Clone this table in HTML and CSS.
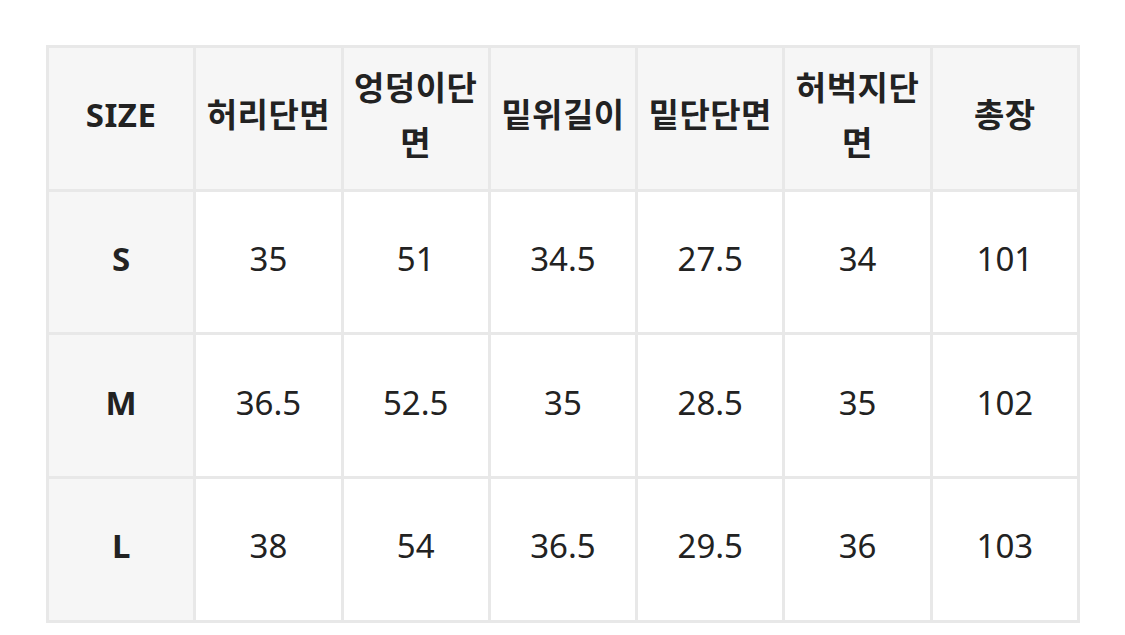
FILE: index.html
```html
<!DOCTYPE html>
<html lang="ko">
<head>
<meta charset="utf-8">
<title>Size chart</title>
<link rel="stylesheet" href="styles.css">
</head>
<body>
<div class="wrap">
<table class="size-table">
  <thead>
    <tr>
      <th>SIZE</th>
      <th>허리단면</th>
      <th>엉덩이단면</th>
      <th>밑위길이</th>
      <th>밑단단면</th>
      <th>허벅지단면</th>
      <th>총장</th>
    </tr>
  </thead>
  <tbody>
    <tr>
      <th>S</th><td>35</td><td>51</td><td>34.5</td><td>27.5</td><td>34</td><td>101</td>
    </tr>
    <tr>
      <th>M</th><td>36.5</td><td>52.5</td><td>35</td><td>28.5</td><td>35</td><td>102</td>
    </tr>
    <tr>
      <th>L</th><td>38</td><td>54</td><td>36.5</td><td>29.5</td><td>36</td><td>103</td>
    </tr>
  </tbody>
</table>
</div>
</body>
</html>
```

FILE: styles.css
```css
html, body {
  margin: 0;
  padding: 0;
  background: #ffffff;
}

.wrap {
  padding: 45px 0 0 46px;
}

.size-table {
  border-collapse: collapse;
  table-layout: fixed;
  width: 1034px;
  font-family: "Noto Sans", "Noto Sans CJK KR", sans-serif;
  font-size: 33px;
  color: #222222;
  border: 3px solid #e8e8e8;
}

.size-table th,
.size-table td {
  border: 3px solid #e8e8e8;
  height: 133.7px;
  padding: 0 6px 7px;
  text-align: center;
  vertical-align: middle;
  line-height: 55px;
  word-break: keep-all;
  overflow-wrap: anywhere;
}

.size-table th {
  background: #f6f6f6;
  font-weight: 700;
}

.size-table thead th {
  letter-spacing: 0.5px;
}

.size-table td {
  background: #ffffff;
  font-weight: 400;
}
```
